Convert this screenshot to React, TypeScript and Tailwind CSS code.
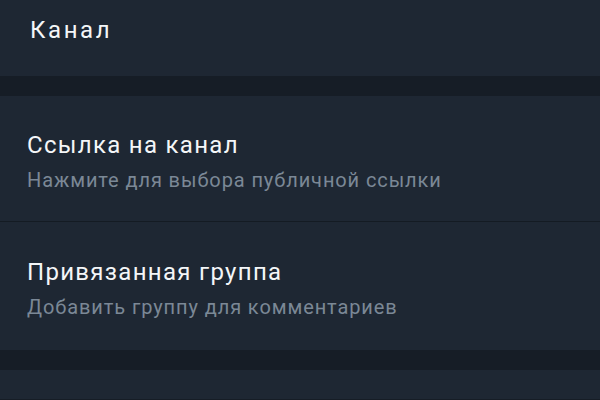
const rows = [
  { title: "Ссылка на канал", subtitle: "Нажмите для выбора публичной ссылки" },
  { title: "Привязанная группа", subtitle: "Добавить группу для комментариев" },
];

export default function App() {
  return (
    <div className="h-[400px] w-[600px] overflow-hidden bg-[#161d26] font-['Roboto',sans-serif]">
      <div className="h-[76px] bg-[#1e2733] px-[30px] pt-[15px]">
        <span className="text-[24px] leading-[30px] tracking-[2.6px] text-[#f4f6f8]">Канал</span>
      </div>
      <div className="h-[20px]" />
      <div className="bg-[#1e2733]">
        {rows.map((row, i) => (
          <div
            key={row.title}
            className={
              i === 0
                ? "h-[126px] border-b border-[#141b23] px-[27px] pt-[34px]"
                : "h-[128px] px-[27px] pt-[35px]"
            }
          >
            <div className="text-[24px] leading-[30px] tracking-[1.3px] text-[#f4f6f8]">{row.title}</div>
            <div className="mt-[7px] text-[20px] leading-[26px] tracking-[0.9px] text-[#7b8896]">{row.subtitle}</div>
          </div>
        ))}
      </div>
      <div className="h-[20px]" />
      <div className="h-[29px] bg-[#1e2733]" />
    </div>
  );
}
